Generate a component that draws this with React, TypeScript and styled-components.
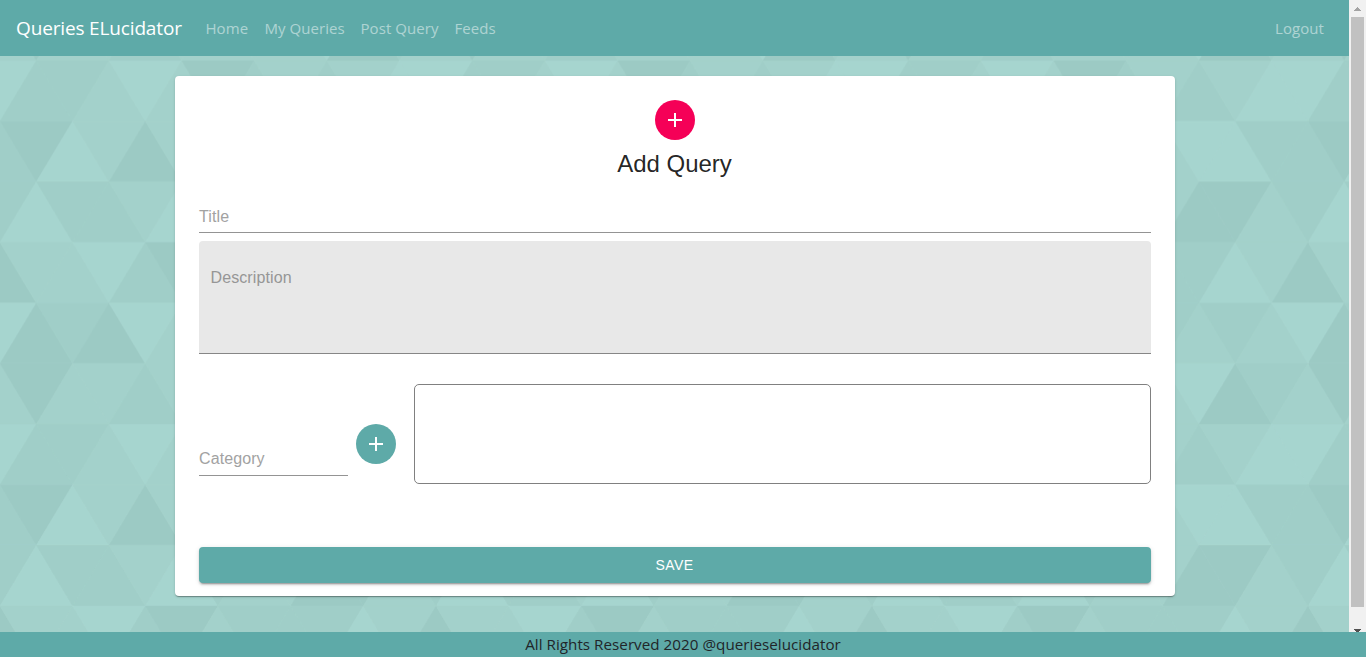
import React from "react";
import styled, { createGlobalStyle } from "styled-components";

const teal = "#5eaaa8";

const GlobalStyle = createGlobalStyle`
  *, *::before, *::after { box-sizing: border-box; }
  html, body { margin: 0; height: 100%; overflow: hidden; }
  body { font-family: "Segoe UI", "Open Sans", "Noto Sans", sans-serif; font-size: 16px; }
`;

const Shell = styled.div`
  display: flex;
  flex-direction: column;
  height: 657px;
`;

const Viewport = styled.div`
  display: flex;
  height: 632px;
  overflow: hidden;
`;

const Page = styled.div`
  position: relative;
  flex: 1;
  display: flex;
  flex-direction: column;
  background: #a3d1cb;
`;

const Backdrop = styled.svg`
  position: absolute;
  inset: 0;
  width: 100%;
  height: 100%;
`;

const Navbar = styled.nav`
  position: relative;
  display: flex;
  align-items: center;
  height: 56px;
  padding: 0 16px;
  background: ${teal};
`;

const Brand = styled.a`
  margin-right: 16px;
  width: 165.5px;
  white-space: nowrap;
  font-size: 19px;
  line-height: 30px;
  letter-spacing: -0.15px;
  color: #fff;
`;

const NavLink = styled.a<{ $width: number }>`
  width: ${(p) => p.$width}px;
  padding: 0 8px;
  white-space: nowrap;
  font-size: 15px;
  line-height: 24px;
  letter-spacing: 0.06px;
  color: rgba(255, 255, 255, 0.5);
`;

const Spacer = styled.div`
  flex: 1;
`;

const Card = styled.main`
  position: relative;
  width: 1000px;
  height: 520px;
  margin: 20px 0 0 175px;
  padding: 24px 24px 0;
  display: flex;
  flex-direction: column;
  background: #fff;
  border-radius: 4px;
  font-family: "Liberation Sans", Arial, sans-serif;
  box-shadow: 0 2px 1px -1px rgba(0, 0, 0, 0.2), 0 1px 1px 0 rgba(0, 0, 0, 0.14),
    0 1px 3px 0 rgba(0, 0, 0, 0.12);
`;

const RoundBadge = styled.div<{ $color: string }>`
  display: flex;
  align-items: center;
  justify-content: center;
  flex: none;
  width: 40px;
  height: 40px;
  border-radius: 50%;
  background: ${(p) => p.$color};
`;

const Header = styled.header`
  display: flex;
  flex-direction: column;
  align-items: center;
`;

const Heading = styled.h1`
  margin: 8px 0 0;
  padding-right: 1px;
  font-size: 24px;
  font-weight: 400;
  line-height: 32px;
  color: rgba(0, 0, 0, 0.87);
`;

const Field = styled.div<{ $width?: string; $height: number; $top: number }>`
  flex: none;
  width: ${(p) => p.$width ?? "100%"};
  height: ${(p) => p.$height}px;
  margin-top: ${(p) => p.$top}px;
  border-bottom: 1px solid #949494;
`;

const Label = styled.label`
  display: block;
  font-size: 16px;
  line-height: 18px;
  letter-spacing: 0.1px;
  color: #a2a2a2;
`;

const TextBox = styled.div`
  flex: none;
  height: 113px;
  margin-top: 8px;
  padding: 28px 12px 0 11.5px;
  background: #e8e8e8;
  border-bottom: 1px solid #868686;
  border-radius: 4px 4px 0 0;
  ${Label} {
    color: #969696;
  }
`;

const CategoryRow = styled.div`
  display: flex;
  flex: none;
  align-items: flex-start;
  height: 100px;
  margin-top: 30px;
`;

const AddSlot = styled.div`
  padding: 40px 18px 0 8px;
`;

const ChipArea = styled.div`
  flex: 1;
  height: 100px;
  border: 1px solid #808080;
  border-radius: 5px;
`;

const SaveButton = styled.button`
  flex: none;
  height: 36px;
  margin-top: 63px;
  padding: 0 1px 0 0;
  border: 0;
  border-radius: 4px;
  background: ${teal};
  color: #fff;
  font-family: inherit;
  font-size: 14px;
  letter-spacing: 0.4px;
  line-height: 24px;
  text-transform: uppercase;
  box-shadow: 0 3px 1px -2px rgba(0, 0, 0, 0.2), 0 2px 2px 0 rgba(0, 0, 0, 0.14),
    0 1px 5px 0 rgba(0, 0, 0, 0.12);
`;

const Scrollbar = styled.div`
  display: flex;
  flex-direction: column;
  align-items: center;
  width: 17px;
  background: #f1f1f1;
`;

const ArrowBox = styled.svg`
  display: block;
  flex: none;
  width: 17px;
  height: 17px;
`;

const Thumb = styled.div`
  flex: none;
  width: 13px;
  height: 590px;
  margin-bottom: 15px;
  background: #c1c1c1;
`;

const Footer = styled.footer`
  height: 25px;
  background: ${teal};
  color: #212529;
  font-size: 15.2px;
  line-height: 25px;
  letter-spacing: 0.03px;
  text-align: center;
`;

const SIDE = 436 / 6;
const ROW = 60.6;
const shades: Record<string, string> = {
  a: "#a6d5cf",
  b: "#a3d1cb",
  c: "#a0cec8",
  d: "#9ccac4",
};

// Shades of the up-pointing and down-pointing triangles of each row of the tile.
const rows = [
  { up: "cbbcca", down: "cadbba" },
  { up: "caddba", down: "dbbbac" },
  { up: "acabdb", down: "cbcbdc" },
  { up: "dbcbca", down: "badccb" },
  { up: "ddbbbb", down: "caacca" },
  { up: "bbcbbd", down: "dbbbac" },
];

const Triangles = () => {
  const shapes: React.ReactNode[] = [];
  rows.forEach((row, r) => {
    const shift = r % 2 === 0 ? SIDE / 2 : 0;
    const top = r * ROW;
    const bottom = top + ROW;
    for (let k = -1; k <= 6; k++) {
      const i = (k + 6) % 6;
      const x = k * SIDE + shift;
      const up = shades[row.up[i]];
      const down = shades[row.down[i]];
      shapes.push(
        <polygon
          key={`u${r}${k}`}
          points={`${x},${top} ${x + SIDE / 2},${bottom} ${x - SIDE / 2},${bottom}`}
          fill={up}
          stroke={up}
        />,
        <polygon
          key={`d${r}${k}`}
          points={`${x},${top} ${x + SIDE},${top} ${x + SIDE / 2},${bottom}`}
          fill={down}
          stroke={down}
        />
      );
    }
  });
  return <g strokeWidth={0.4}>{shapes}</g>;
};

const Plus = () => (
  <svg width="24" height="24" viewBox="0 0 24 24" fill="#fff">
    <path d="M19 13h-6v6h-2v-6H5v-2h6V5h2v6h6v2z" />
  </svg>
);

export default function App() {
  return (
    <Shell>
      <GlobalStyle />
      <Viewport>
        <Page>
          <Backdrop aria-hidden="true">
            <defs>
              <pattern
                id="tile"
                width="436"
                height={ROW * 6}
                patternUnits="userSpaceOnUse"
                patternTransform="translate(0 60.6)"
              >
                <Triangles />
              </pattern>
            </defs>
            <rect width="100%" height="100%" fill="url(#tile)" />
          </Backdrop>
          <Navbar>
            <Brand>Queries ELucidator</Brand>
            <NavLink $width={59}>Home</NavLink>
            <NavLink $width={96}>My Queries</NavLink>
            <NavLink $width={94}>Post Query</NavLink>
            <NavLink $width={57}>Feeds</NavLink>
            <Spacer />
            <NavLink $width={66}>Logout</NavLink>
          </Navbar>
          <Card>
            <Header>
              <RoundBadge $color="#f50057">
                <Plus />
              </RoundBadge>
              <Heading>Add Query</Heading>
            </Header>
            <Field $height={25} $top={28}>
              <Label>Title</Label>
            </Field>
            <TextBox>
              <Label>Description</Label>
            </TextBox>
            <CategoryRow>
              <Field $width="149px" $height={26} $top={66}>
                <Label>Category</Label>
              </Field>
              <AddSlot>
                <RoundBadge $color={teal}>
                  <Plus />
                </RoundBadge>
              </AddSlot>
              <ChipArea />
            </CategoryRow>
            <SaveButton>Save</SaveButton>
          </Card>
        </Page>
        <Scrollbar>
          <ArrowBox viewBox="0 0 17 17" shapeRendering="crispEdges">
            <path d="M8 7h1v1h1v1h1v1h1v1H5v-1h1V9h1V8h1z" fill="#a3a3a3" />
          </ArrowBox>
          <Thumb />
          <ArrowBox viewBox="0 0 17 17" shapeRendering="crispEdges">
            <path d="M5 7h7v1h-1v1h-1v1H7V9H6V8H5z" fill="#505050" />
          </ArrowBox>
        </Scrollbar>
      </Viewport>
      <Footer>All Rights Reserved 2020 @querieselucidator</Footer>
    </Shell>
  );
}
